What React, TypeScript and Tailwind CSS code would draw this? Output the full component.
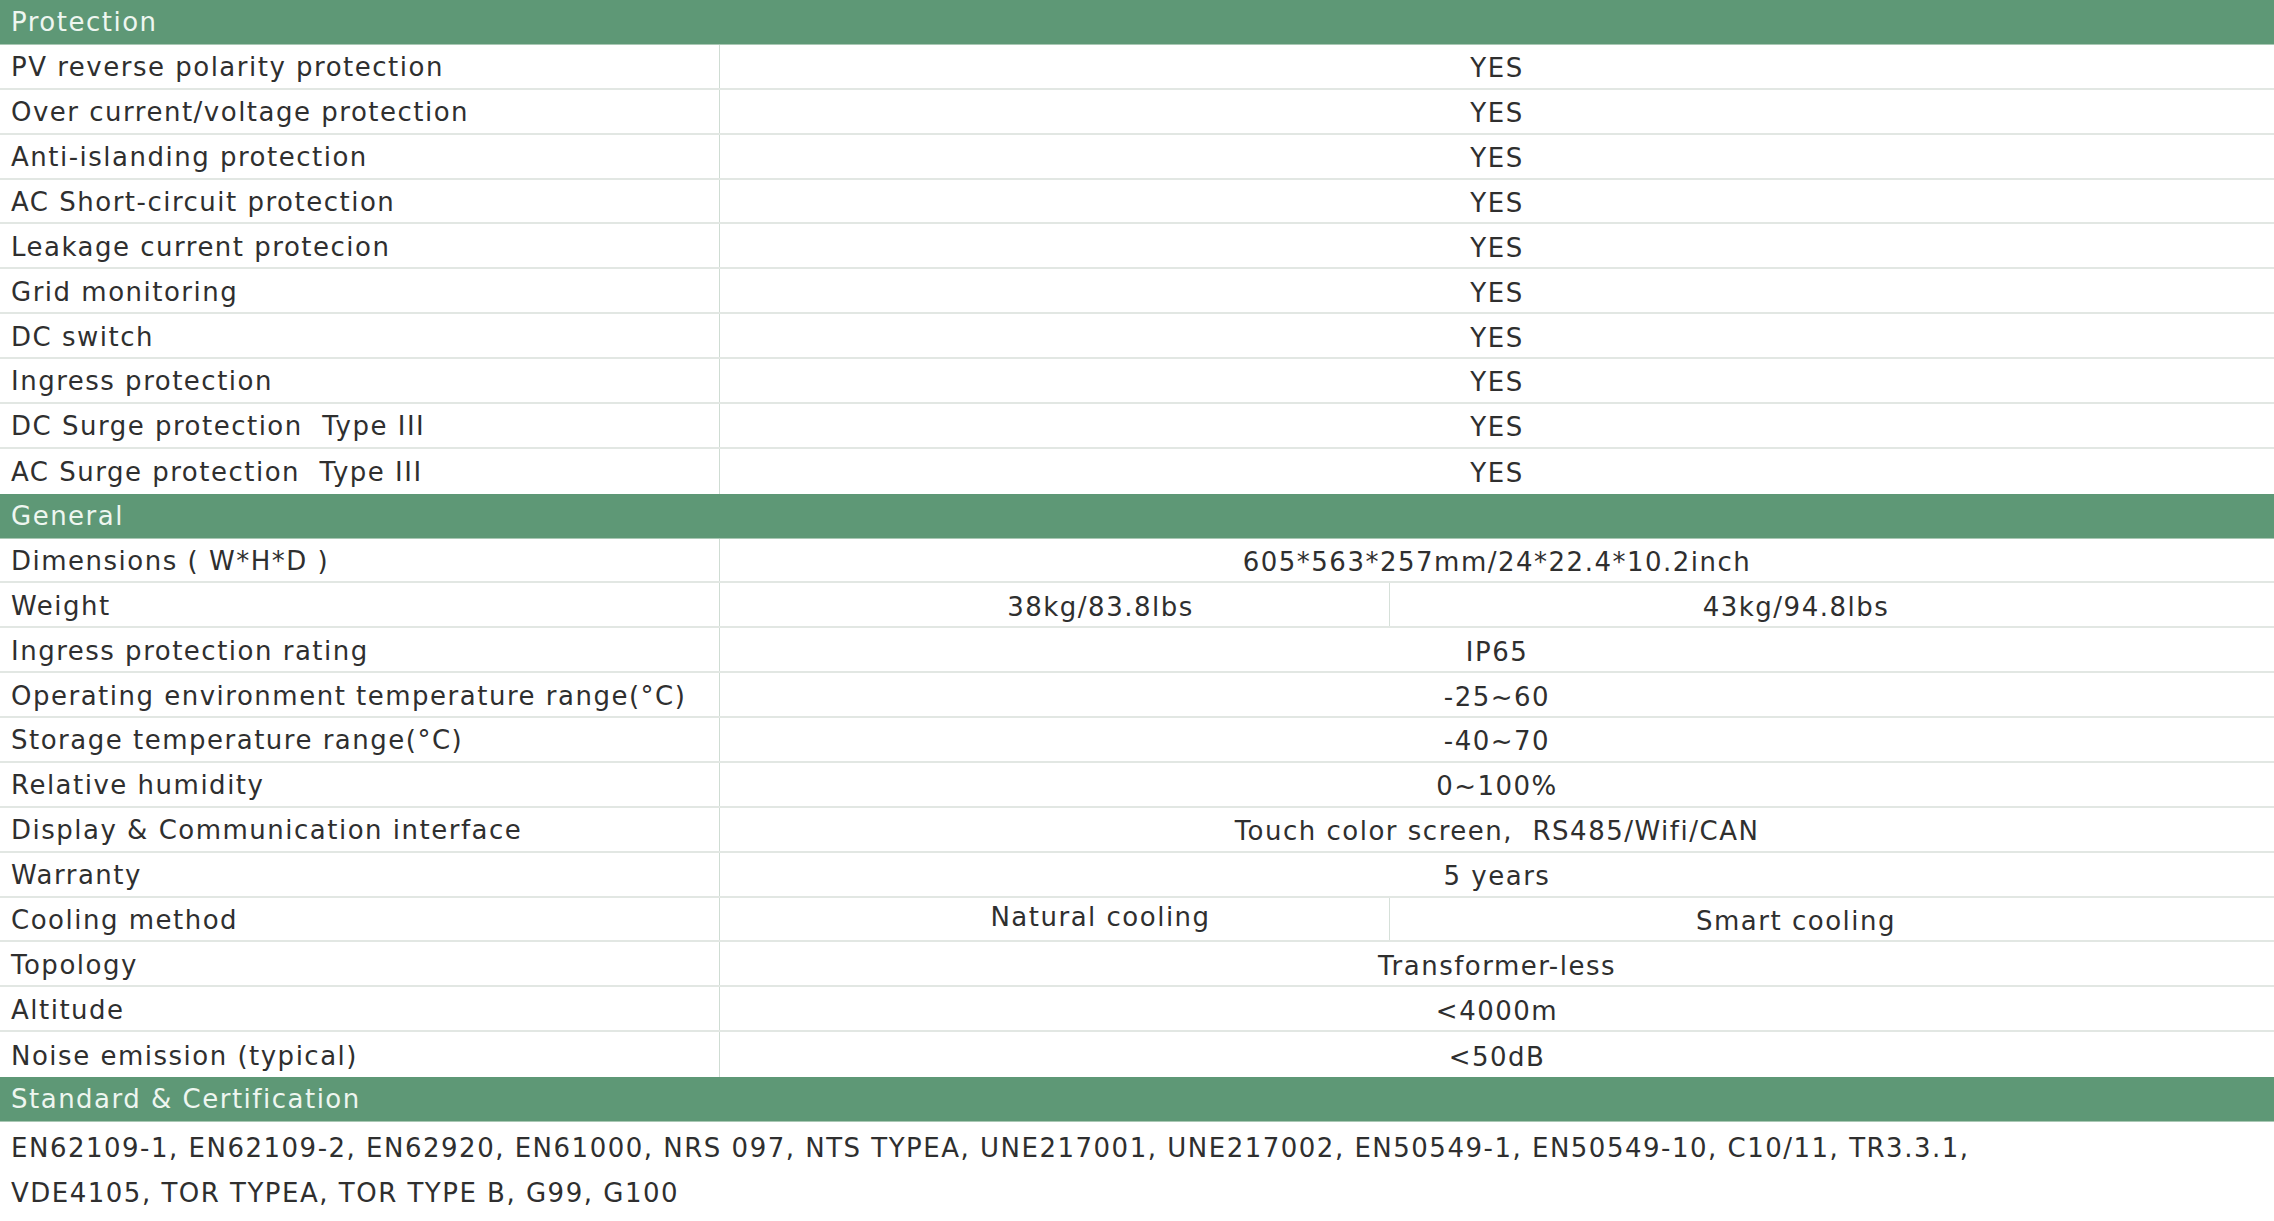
import React from "react";

type Row = { label: string; value?: string; split?: [string, string]; raise?: boolean };

const protection: Row[] = [
  { label: "PV reverse polarity protection", value: "YES" },
  { label: "Over current/voltage protection", value: "YES" },
  { label: "Anti-islanding protection", value: "YES" },
  { label: "AC Short-circuit protection", value: "YES" },
  { label: "Leakage current protecion", value: "YES" },
  { label: "Grid monitoring", value: "YES" },
  { label: "DC switch", value: "YES" },
  { label: "Ingress protection", value: "YES" },
  { label: "DC Surge protection  Type III", value: "YES" },
  { label: "AC Surge protection  Type III", value: "YES" },
];

const general: Row[] = [
  { label: "Dimensions ( W*H*D )", value: "605*563*257mm/24*22.4*10.2inch" },
  { label: "Weight", split: ["38kg/83.8lbs", "43kg/94.8lbs"] },
  { label: "Ingress protection rating", value: "IP65" },
  { label: "Operating environment temperature range(°C)", value: "-25~60" },
  { label: "Storage temperature range(°C)", value: "-40~70" },
  { label: "Relative humidity", value: "0~100%" },
  { label: "Display & Communication interface", value: "Touch color screen,  RS485/Wifi/CAN" },
  { label: "Warranty", value: "5 years" },
  { label: "Cooling method", split: ["Natural cooling", "Smart cooling"], raise: true },
  { label: "Topology", value: "Transformer-less" },
  { label: "Altitude", value: "<4000m" },
  { label: "Noise emission (typical)", value: "<50dB" },
];

function Header({ title }: { title: string }) {
  return (
    <div className="flex h-[44.875px] items-center bg-[#5e9876] pl-[11px] pt-[1px] text-[#eef6f0] border-b border-[#a9c8b4]">
      {title}
    </div>
  );
}

function SpecRow({ row, last }: { row: Row; last?: boolean }) {
  return (
    <div
      className={`grid h-[44.875px] grid-cols-[719px_1fr] ${last ? "" : "border-b-2 border-[#e2e7e3]"}`}
    >
      <div className="flex items-center whitespace-pre pl-[11px] pt-[2px]">{row.label}</div>
      {row.split ? (
        <div className="grid grid-cols-[669px_1fr] border-l border-[#cfdcd3]">
          <div className={`flex items-center justify-center whitespace-pre pl-[92px] ${row.raise ? "pb-[4px]" : "pt-[4px]"}`}>
            {row.split[0]}
          </div>
          <div className="flex items-center justify-center whitespace-pre border-l border-[#d6e0d9] pr-[72px] pt-[4px]">
            {row.split[1]}
          </div>
        </div>
      ) : (
        <div className="flex items-center justify-center whitespace-pre border-l border-[#cfdcd3] pt-[4px]">
          {row.value}
        </div>
      )}
    </div>
  );
}

export default function App() {
  return (
    <div
      className="h-[1221px] w-[2274px] overflow-hidden bg-white text-[26px] leading-none tracking-[1.5px] text-[#2f2f2f]"
      style={{ fontFamily: '"DejaVu Sans", sans-serif' }}
    >
      <Header title="Protection" />
      {protection.map((r, i) => (
        <SpecRow key={r.label} row={r} last={i === protection.length - 1} />
      ))}
      <Header title="General" />
      {general.map((r, i) => (
        <SpecRow key={r.label} row={r} last={i === general.length - 1} />
      ))}
      <Header title="Standard & Certification" />
      <div className="pl-[11px] pt-[4px] leading-[45px]">
        <div>
          EN62109-1, EN62109-2, EN62920, EN61000, NRS 097, NTS TYPEA, UNE217001, UNE217002, EN50549-1, EN50549-10, C10/11, TR3.3.1,
        </div>
        <div>VDE4105, TOR TYPEA, TOR TYPE B, G99, G100</div>
      </div>
    </div>
  );
}
